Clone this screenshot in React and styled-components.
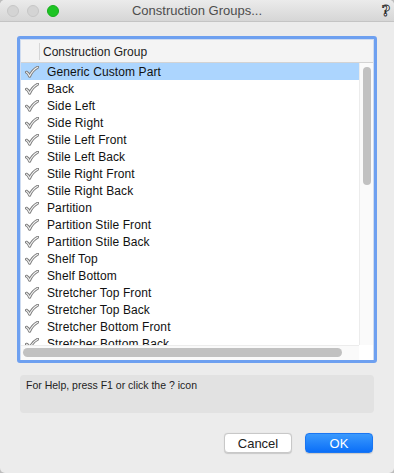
import React from "react";
import styled, { createGlobalStyle } from "styled-components";

const Global = createGlobalStyle`
  html, body { margin: 0; padding: 0; background: #bdbdbd; }
  body { font-family: "Liberation Sans", Arial, sans-serif; }
  * { box-sizing: border-box; }
`;

const Window = styled.div`
  width: 394px;
  height: 473px;
  background: #ececec;
  border-radius: 5px;
  overflow: hidden;
  display: flex;
  flex-direction: column;
`;

const TitleBar = styled.div`
  height: 22px;
  flex: none;
  display: flex;
  align-items: center;
  position: relative;
  background: linear-gradient(#ebebeb, #d6d6d6);
  border-bottom: 1px solid #c4c4c4;
  padding-left: 7px;
`;

const Lights = styled.div`
  display: flex;
  gap: 8px;
`;

const Light = styled.span`
  width: 12px;
  height: 12px;
  border-radius: 50%;
  background: ${(p) => (p.$on ? "#1dc424" : "#d4d4d4")};
  border: 1px solid ${(p) => (p.$on ? "#16ad1c" : "#c6c6c6")};
`;

const Title = styled.div`
  position: absolute;
  left: 0;
  right: 0;
  top: 0;
  bottom: 0;
  display: flex;
  align-items: center;
  justify-content: center;
  font-size: 13px;
  color: #4d4d4d;
  pointer-events: none;
`;

const HelpMark = styled.span`
  position: absolute;
  right: 4px;
  top: 3px;
  font-family: "DejaVu Serif", serif;
  font-weight: bold;
  font-size: 14px;
  color: #fff;
  -webkit-text-stroke: 0.9px #2a2a2a;
  line-height: 16px;
`;

const Body = styled.div`
  flex: 1;
  display: flex;
  flex-direction: column;
  padding: 14px 17px 0 17px;
`;

const ListFrame = styled.div`
  width: 360px;
  height: 327px;
  border: 3px solid #6ea0f0;
  border-radius: 3px;
  background: #fff;
  display: grid;
  grid-template-columns: 338px 14px;
  grid-template-rows: 23px 282px 15px;
  padding: 1px 1px 0 1px;
  box-shadow: inset 0 0 0 1px #cfdcf0;
`;

const Header = styled.div`
  grid-column: 1 / 3;
  background: #f4f4f4;
  border-bottom: 1px solid #d3d3d3;
  display: flex;
  align-items: center;
  font-size: 12px;
  color: #222;
`;

const HeaderCheckCol = styled.div`
  width: 19px;
  height: 17px;
  border-right: 1px solid #d6d6d6;
  align-self: flex-end;
  margin-bottom: 2px;
`;

const HeaderLabel = styled.span`
  padding: 1px 0 0 3px;
`;

const Rows = styled.div`
  overflow: hidden;
  display: flex;
  flex-direction: column;
`;

const Row = styled.div`
  height: 17px;
  flex: none;
  display: flex;
  align-items: center;
  background: ${(p) => (p.$selected ? "#acd5fe" : "transparent")};
  font-size: 12px;
  color: #111;
`;

const RowLabel = styled.span`
  padding-top: 1px;
  letter-spacing: 0.1px;
`;

const CheckCell = styled.span`
  width: 26px;
  padding-left: 4px;
  display: flex;
  align-items: center;
`;

const VScroll = styled.div`
  background: #fafafa;
  border-left: 1px solid #ececec;
  padding: 4px 0 0 3px;
`;

const VThumb = styled.div`
  width: 8px;
  height: 118px;
  border-radius: 4px;
  background: #c1c1c1;
`;

const HScroll = styled.div`
  background: #fafafa;
  border-top: 1px solid #ececec;
  padding: 2px 0 0 2px;
`;

const HThumb = styled.div`
  width: 319px;
  height: 9px;
  border-radius: 4.5px;
  background: #c1c1c1;
`;

const Corner = styled.div`
  background: #fff;
`;

const HelpBox = styled.div`
  margin: 12px 3px 0 3px;
  height: 38px;
  background: #e2e2e2;
  border-radius: 4px;
  padding: 4px 6px;
  font-size: 10.5px;
  color: #222;
  line-height: 13px;
`;

const Buttons = styled.div`
  display: flex;
  justify-content: flex-end;
  gap: 13px;
  margin-top: 20px;
  padding-right: 4px;
`;

const Button = styled.button`
  width: 68px;
  height: 20px;
  border-radius: 4px;
  font-family: "Liberation Sans", Arial, sans-serif;
  font-size: 13px;
  padding: 0;
  display: flex;
  align-items: center;
  justify-content: center;
  border: ${(p) => (p.$primary ? "1px solid #1a76f2" : "1px solid #c8c8c8")};
  background: ${(p) =>
    p.$primary ? "linear-gradient(#3b9afd, #0b6ff8)" : "#fff"};
  color: ${(p) => (p.$primary ? "#fff" : "#222")};
  box-shadow: 0 0.5px 1px rgba(0, 0, 0, 0.15);
`;

const Check = () => (
  <svg width="14" height="12" viewBox="0 0 15 12">
    <path
      d="M1.6 6.2 C3 6.8 4 8.3 4.9 10.6 C7 6 9.8 2.8 13.6 0.9"
      fill="none"
      stroke="#7c7c7c"
      strokeWidth="3.2"
      strokeLinecap="round"
      strokeLinejoin="round"
    />
    <path
      d="M1.6 6.2 C3 6.8 4 8.3 4.9 10.6 C7 6 9.8 2.8 13.6 0.9"
      fill="none"
      stroke="#f2f2f2"
      strokeWidth="1.2"
      strokeLinecap="round"
      strokeLinejoin="round"
    />
  </svg>
);

const items = [
  "Generic Custom Part",
  "Back",
  "Side Left",
  "Side Right",
  "Stile Left Front",
  "Stile Left Back",
  "Stile Right Front",
  "Stile Right Back",
  "Partition",
  "Partition Stile Front",
  "Partition Stile Back",
  "Shelf Top",
  "Shelf Bottom",
  "Stretcher Top Front",
  "Stretcher Top Back",
  "Stretcher Bottom Front",
  "Stretcher Bottom Back",
];

export default function App() {
  return (
    <>
      <Global />
      <Window>
        <TitleBar>
          <Lights>
            <Light />
            <Light />
            <Light $on />
          </Lights>
          <Title>Construction Groups...</Title>
          <HelpMark>?</HelpMark>
        </TitleBar>
        <Body>
          <ListFrame>
            <Header>
              <HeaderCheckCol />
              <HeaderLabel>Construction Group</HeaderLabel>
            </Header>
            <Rows>
              {items.map((t, i) => (
                <Row key={t} $selected={i === 0}>
                  <CheckCell>
                    <Check />
                  </CheckCell>
                  <RowLabel>{t}</RowLabel>
                </Row>
              ))}
            </Rows>
            <VScroll>
              <VThumb />
            </VScroll>
            <HScroll>
              <HThumb />
            </HScroll>
            <Corner />
          </ListFrame>
          <HelpBox>For Help, press F1 or click the ? icon</HelpBox>
          <Buttons>
            <Button>Cancel</Button>
            <Button $primary>OK</Button>
          </Buttons>
        </Body>
      </Window>
    </>
  );
}
